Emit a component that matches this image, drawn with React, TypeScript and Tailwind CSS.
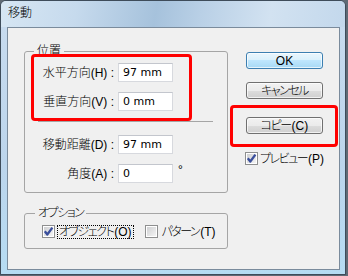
import type { ReactNode } from "react";

const uiFont = "font-['Liberation_Sans','Noto_Sans_CJK_JP',sans-serif] [font-feature-settings:'palt'] font-light";

function CheckBox({ checked }: { checked: boolean }) {
  return (
    <span className="relative flex h-[13px] w-[13px] shrink-0 items-center justify-center border border-[#8e8f8f] bg-white p-[1px]">
      <span className="h-full w-full bg-[linear-gradient(135deg,#cfd0d2,#f4f4f4)]" />
      {checked && (
        <svg className="absolute left-[0px] top-[0px]" width="11" height="11" viewBox="0 0 11 11">
          <path d="M1.8 5.3 L4.3 8.5 L9.4 1.6" fill="none" stroke="#3a4f9c" strokeWidth="2.3" strokeLinejoin="round" />
        </svg>
      )}
    </span>
  );
}

// katakana + mnemonic, katakana set tighter like the proportional UI font
function Kana({ text, key_ }: { text: string; key_?: string }) {
  return (
    <span className="whitespace-nowrap leading-none">
      <span className="tracking-[-1.5px]">{text}</span>
      {key_ && <span className="ml-[1px]">({key_})</span>}
    </span>
  );
}

function Button({ children, primary }: { children: ReactNode; primary?: boolean }) {
  return (
    <button
      className={
        primary
          ? "flex h-[17px] w-[77px] items-center justify-center whitespace-nowrap rounded-[3px] border border-[#3c7fb1] bg-[linear-gradient(#eaf6fd,#d9f0fc_50%,#bee6fd_50%,#a7d9f5)] text-[12px] leading-none text-black shadow-[inset_0_0_0_1px_rgba(255,255,255,0.7)]"
          : "flex h-[17px] w-[77px] items-center justify-center whitespace-nowrap rounded-[3px] border border-[#707070] bg-[linear-gradient(#f2f2f2,#ebebeb_50%,#dddddd_50%,#cfcfcf)] text-[12px] leading-none text-black shadow-[inset_0_0_0_1px_rgba(255,255,255,0.7)]"
      }
    >
      {children}
    </button>
  );
}

function Row({ label, value, suffix }: { label: string; value: string; suffix?: ReactNode }) {
  return (
    <div className="flex h-[19px] items-center">
      <span className="w-[89px] whitespace-nowrap text-right text-[12px] leading-none">{label}</span>
      <input
        readOnly
        value={value}
        className="ml-[4px] h-[19px] w-[55px] border border-[#d7d9de] border-t-[#c3c6cd] bg-white pl-[4px] font-['DejaVu_Sans',sans-serif] text-[11px] font-normal text-black outline-none"
      />
      {suffix}
    </div>
  );
}

export default function App() {
  return (
    <div className={`h-[276px] w-[348px] overflow-hidden bg-[#5f6a75] text-black ${uiFont}`}>
      <div className="flex h-[275px] w-[346px] flex-col rounded-t-[6px] border border-[#3e4c5a] bg-[linear-gradient(#c9dcef,#bcd5ec_60%,#b6dcf3)]">
        <div className="flex h-[26px] items-center rounded-t-[5px] bg-[linear-gradient(100deg,#d6e6f3_0%,#c6daed_22%,#a6c2dc_45%,#b9d0e6_58%,#d2e2f1_78%,#c3d8ec_100%)] pb-[2px] pl-[7px] text-[12px]">
          移動
        </div>
        <div className="relative ml-[6px] flex h-[243px] w-[333px] border border-[#7a8b9c] bg-[#f0f0f0] pl-[16px] pt-[16px]">
          <div className="flex w-[204px] shrink-0 flex-col">
            <fieldset className="rounded-[3px] border border-[#a5a5a5] pb-[9px] pt-[5px]">
              <legend className="ml-[9px] px-[3px] text-[12px] leading-[14px]">位置</legend>
              <Row label="水平方向(H) :" value="97 mm" />
              <div className="mt-[10px]">
                <Row label="垂直方向(V) :" value="0 mm" />
              </div>
              <div className="ml-[13px] mr-[14px] mt-[10px] h-[1px] bg-[#a5a5a5]" />
              <div className="mt-[13px]">
                <Row label="移動距離(D) :" value="97 mm" />
              </div>
              <div className="mt-[10px]">
                <Row
                  label="角度(A) :"
                  value="0"
                  suffix={<span className="-mt-[7px] ml-[5px] text-[12px] leading-none">°</span>}
                />
              </div>
            </fieldset>
            <fieldset className="mt-[13px] rounded-[3px] border border-[#a5a5a5] pb-[10px] pt-[5px]">
              <legend className="ml-[10px] px-[3px] text-[12px] leading-[14px]">
                <Kana text="オプション" />
              </legend>
              <div className="flex h-[13px] items-center whitespace-nowrap pl-[17px] text-[12px]">
                <CheckBox checked />
                <span className="ml-[2px] flex h-[14px] shrink-0 items-center border border-dotted border-black px-[1px]">
                  <Kana text="オブジェクト" key_="O" />
                </span>
                <span className="ml-[11px] shrink-0">
                  <CheckBox checked={false} />
                </span>
                <span className="ml-[4px] shrink-0">
                  <Kana text="パターン" key_="T" />
                </span>
              </div>
            </fieldset>
          </div>
          <div className="ml-[18px] mt-[8px] flex w-[77px] shrink-0 flex-col">
            <Button primary>OK</Button>
            <div className="mt-[13px]">
              <Button>
                <Kana text="キャンセル" />
              </Button>
            </div>
            <div className="mt-[18px]">
              <Button>
                <Kana text="コピー" key_="C" />
              </Button>
            </div>
            <div className="-ml-[1px] mt-[18px] flex h-[13px] items-center whitespace-nowrap text-[12px]">
              <CheckBox checked />
              <span className="ml-[2px] shrink-0">
                <Kana text="プレビュー" key_="P" />
              </span>
            </div>
          </div>
          <div className="absolute left-[23px] top-[26px] h-[67px] w-[161px] rounded-[4px] border-[3px] border-[#ff0000]" />
          <div className="absolute left-[222px] top-[77px] h-[42px] w-[108px] rounded-[4px] border-[3px] border-[#ff0000]" />
        </div>
      </div>
    </div>
  );
}
